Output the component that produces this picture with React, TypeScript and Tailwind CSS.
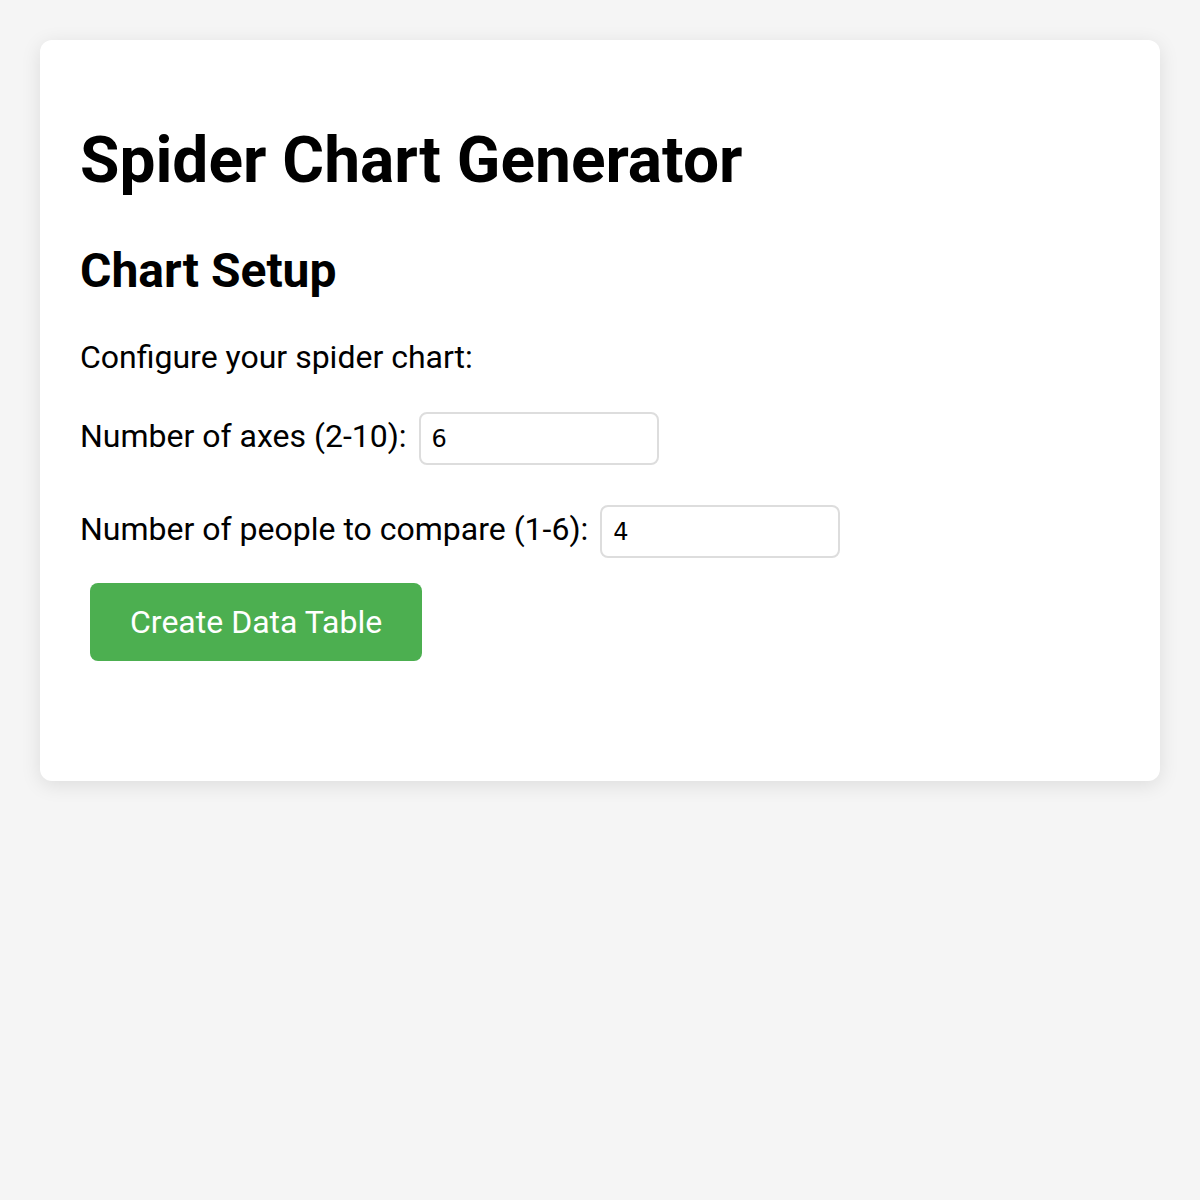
import { useState } from 'react';

export default function App() {
  const [axes, setAxes] = useState('6');
  const [people, setPeople] = useState('4');

  return (
    <div className="min-h-[1200px] bg-[#f5f5f5] p-10 font-['Roboto',sans-serif] text-black">
      <div className="rounded-[12px] bg-white px-10 pt-10 pb-[120px] shadow-[0_4px_20px_rgba(0,0,0,0.1)]">
        <h1 className="mt-[43px] text-[64px] font-bold leading-[75px]">Spider Chart Generator</h1>
        <h2 className="mt-[45px] text-[48px] font-bold leading-[56px]">Chart Setup</h2>
        <p className="mt-[39px] text-[32px] leading-[38px]">Configure your spider chart:</p>

        <div className="mt-[36px] flex items-center gap-3">
          <label className="mb-[5px] text-[32px] leading-[38px]">Number of axes (2-10):</label>
          <input
            type="number"
            value={axes}
            onChange={(e) => setAxes(e.target.value)}
            className="h-[53px] w-[240px] rounded-[8px] border-2 border-[#dddddd] px-[11px] font-['DejaVu_Sans',sans-serif] text-[24px] outline-none [appearance:textfield]"
          />
        </div>

        <div className="mt-[40px] flex items-center gap-3">
          <label className="mb-[5px] text-[32px] leading-[38px]">Number of people to compare (1-6):</label>
          <input
            type="number"
            value={people}
            onChange={(e) => setPeople(e.target.value)}
            className="h-[53px] w-[240px] rounded-[8px] border-2 border-[#dddddd] px-[11px] font-['DejaVu_Sans',sans-serif] text-[24px] outline-none [appearance:textfield]"
          />
        </div>

        <button
          type="button"
          className="mt-[25px] ml-[10px] h-[78px] rounded-[8px] bg-[#4caf50] px-10 text-[32px] leading-[38px] text-white"
        >
          Create Data Table
        </button>
      </div>
    </div>
  );
}
